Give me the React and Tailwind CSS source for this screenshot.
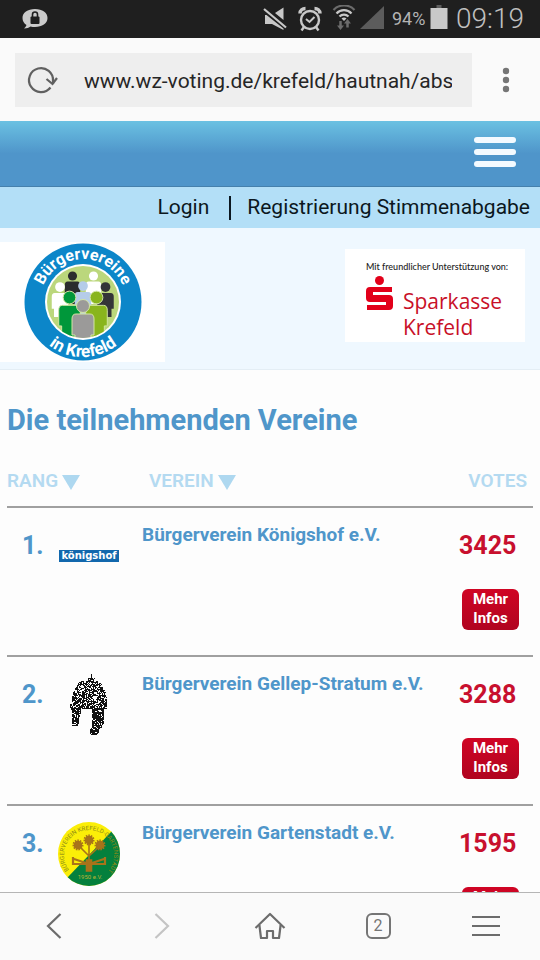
import React from "react";

const roboto = "font-['Roboto',sans-serif]";

function StatusBar() {
  return (
    <div className="flex h-[38px] shrink-0 items-center bg-[#1f1f1f] pr-4 pl-[22px] text-[#b4b4b4]">
      <svg className="h-[22px] w-[26px]" viewBox="0 0 26 22">
        <path d="M13 1C5.600 1 .5 4.600 .5 10c0 3 1.500 5.500 4 7-.5 1.500-1.500 2.500-2.500 3.500 3 0 5-.7 6.500-2 1.300.4 3 .5 4.500.5 7 0 12.500-3.700 12.500-9S20.400 1 13 1z" fill="#cbcbcb" />
        <rect x="8.500" y="8.500" width="9" height="7.500" rx="1" fill="#1f1f1f" />
        <path d="M10.500 9V6.500a2.500 2.500 0 0 1 5 0V9" fill="none" stroke="#1f1f1f" strokeWidth="1.600" />
      </svg>
      <div className="ml-auto flex items-center">
        <svg className="h-7 w-[26px]" viewBox="0 0 26 28" fill="#c8c8c8">
          <path d="M13 8L21.500 2.500v12.500z" />
          <path d="M3 10v9h7l11.500 6v-1.500L4.500 10z" />
          <path d="M2 4l22 18.500" stroke="#c8c8c8" strokeWidth="2.200" />
        </svg>
        <svg className="ml-2.5 h-7 w-6" viewBox="0 0 24 28" fill="none" stroke="#c8c8c8">
          <circle cx="12" cy="15" r="9" strokeWidth="2.400" />
          <path d="M8 14l3.500 3 5-5" strokeWidth="2" />
          <path d="M2 8.500c0-3 2.500-5 5.500-5M22 8.500c0-3-2.500-5-5.500-5" strokeWidth="3.500" />
          <path d="M6 22l-2.500 3.500M18 22l2.500 3.500" strokeWidth="2.400" />
        </svg>
        <svg className="ml-2.5 h-7 w-6" viewBox="0 0 24 28" fill="none">
          <path d="M1.500 5C7-1 17-1 22.500 5" stroke="#6c6c6c" strokeWidth="2.200" />
          <path d="M4.500 8.500c4-4.500 11-4.500 15 0M7.500 11.500c2.500-2.500 6.500-2.500 9 0" stroke="#c8c8c8" strokeWidth="2.200" />
          <path d="M9.500 13.500c1.500-1.300 3.500-1.300 5 0L12 16z" fill="#c8c8c8" />
          <path d="M8.500 16v6M15.500 22.500v-5" stroke="#6c6c6c" strokeWidth="2.500" />
          <path d="M5 20.500h7L8.500 25zM12 18.500h7L15.500 14z" fill="#6c6c6c" />
        </svg>
        <svg className="ml-1 h-7 w-6" viewBox="0 0 24 28">
          <path d="M0 24L24 1v23z" fill="#5c5c5c" />
        </svg>
        <span className="ml-2 w-[34px] text-lg whitespace-nowrap">94%</span>
        <svg className="ml-1 h-7 w-[18px]" viewBox="0 0 18 28">
          <path d="M6.500 0h5v4h-5z" fill="#5c5c5c" />
          <path d="M.5 3h17v21H.5z" fill="#c8c8c8" />
        </svg>
        <span className="ml-2 text-[28px] leading-8 font-light text-[#c0c0c0]">09:19</span>
      </div>
    </div>
  );
}

function AddressBar() {
  return (
    <div className="flex h-[83px] shrink-0 items-center bg-[#fafafa] pl-[15px]">
      <div className="flex h-[54px] min-w-0 flex-1 items-center bg-[#eee] pr-5 pl-[11px]">
        <button aria-label="Neu laden" className="shrink-0">
          <svg className="h-8 w-8" viewBox="0 0 32 32" fill="none" stroke="#606060" strokeWidth="2.200">
            <path d="M24.500 23.500A12 12 0 1 1 27 17v3" />
            <path d="M20.500 15l6 5 4.500-6" />
          </svg>
        </button>
        <input
          aria-label="Adresse"
          defaultValue="www.wz-voting.de/krefeld/hautnah/abstimmung"
          className="ml-[26px] h-10 min-w-0 flex-1 bg-transparent pt-0.5 text-[21px] text-[#262626] outline-none"
        />
      </div>
      <button aria-label="Optionen" className="flex w-[68px] justify-center">
        <svg className="h-7 w-2" viewBox="0 0 8 28" fill="#757575">
          <circle cx="4" cy="5" r="3.200" />
          <circle cx="4" cy="14" r="3.200" />
          <circle cx="4" cy="23" r="3.200" />
        </svg>
      </button>
    </div>
  );
}

function Person({ x, y, s, color, outline }) {
  return (
    <g transform={`translate(${x} ${y}) scale(${s})`} fill={color} stroke={outline} strokeWidth="1">
      <path d="M-7 8Q-11 8-11 13V29H-8V40H8V29H11V13Q11 8 7 8z" />
      <circle cx="0" cy="0" r="6.500" />
    </g>
  );
}

function BuergervereineLogo() {
  return (
    <svg className="h-[118px] w-[118px]" viewBox="0 0 118 118" role="img" aria-label="Bürgervereine in Krefeld">
      <defs>
        <clipPath id="inner"><circle cx="59" cy="59" r="36" /></clipPath>
        <path id="arcTop" d="M16 59a43 43 0 0 1 86 0" />
        <path id="arcBottom" d="M4 59a55 55 0 0 0 110 0" />
      </defs>
      <circle cx="59" cy="59" r="58.500" fill="#0c86c9" />
      <circle cx="59" cy="59" r="38" fill="#fff" />
      <circle cx="59" cy="59" r="36" fill="#bbd77c" />
      <g clipPath="url(#inner)">
        <Person x={48.500} y={33} s={0.700} color="#2b2c2e" outline="none" />
        <Person x={69.500} y={33} s={0.700} color="#fff" outline="none" />
        <Person x={36} y={44} s={0.750} color="#fff" outline="none" />
        <Person x={81.500} y={44} s={0.750} color="#343538" outline="none" />
        <Person x={59} y={43} s={0.750} color="#b5cce9" outline="none" />
        <Person x={45.500} y={54.500} s={0.980} color="#00973a" outline="#d3e6a4" />
        <Person x={72.500} y={54.500} s={0.980} color="#89b51d" outline="#d3e6a4" />
        <Person x={59} y={63} s={1} color="#9b9a99" outline="#d3e6a4" />
      </g>
      <g className={roboto} fill="#fff" fontWeight="700" textAnchor="middle">
        <text fontSize="16"><textPath href="#arcTop" startOffset="50%">Bürgervereine</textPath></text>
        <text fontSize="17"><textPath href="#arcBottom" startOffset="50%">in Krefeld</textPath></text>
      </g>
    </svg>
  );
}

function Sponsor() {
  return (
    <div className="h-[93px] w-[180px] bg-white pt-[9px] pl-[21px] font-['Open_Sans',sans-serif]">
      <p className="font-['Lato',sans-serif] text-[9px] leading-[18px] font-medium whitespace-nowrap text-[#222]">Mit freundlicher Unterstützung von:</p>
      <div className="flex text-[#c81028]">
        <svg className="h-9 w-[27px]" viewBox="0 0 27 36" fill="#e2001a">
          <circle cx="13.500" cy="4.500" r="4.500" />
          <path d="M4 11h22v5H7v3h16a4 4 0 0 1 4 4V30a4 4 0 0 1-4 4H1v-5h19v-3H4a4 4 0 0 1-4-4V15a4 4 0 0 1 4-4z" />
        </svg>
        <p className="ml-2.5 pt-3 text-[21px] leading-[26px] font-medium">Sparkasse<br />Krefeld</p>
      </div>
    </div>
  );
}

function KoenigshofLogo() {
  return (
    <svg className="h-3 w-[60px]" viewBox="0 0 60 12" role="img">
      <rect width="60" height="12" fill="#1268ad" />
      <text x="30" y="9" textAnchor="middle" fill="#fff" fontSize="10" fontWeight="700" fontFamily="DejaVu Sans">königshof</text>
    </svg>
  );
}

const inHelmet = (x, y) => {
  if (y < 7) return Math.abs(x - 22) < (y > 3 ? 4 : 1);
  if (y < 29) return Math.abs(x - 20) < 18 * Math.sqrt(1 - ((30 - y) / 27) ** 2);
  if (y < 35) return x > 0 && x < 38;
  if (y < 52 && x >= 2 + (y - 35) / 16 && x < 12 - (y - 35) / 5) return true;
  const taper = y > 48 ? (y - 48) / 1.7 : 0;
  return y < 61 && x >= (y > 52 ? 21 : 23) && x < 35 - taper;
};

const helmetDots = [];
for (let y = 0; y < 62; y += 1) {
  for (let x = 0; x < 40; x += 1) {
    const noise = Math.abs(Math.sin(x * 127.1 + y * 311.7) * 43758.5453) % 1;
    if (inHelmet(x, y) && noise < (y > 33 ? 0.82 : 0.64)) helmetDots.push([x, y]);
  }
}

function HelmetLogo() {
  return (
    <svg className="h-[62px] w-10" viewBox="0 0 40 62" fill="#111" role="img" aria-label="Helm">
      {helmetDots.map(([x, y]) => <rect key={`${x}-${y}`} x={x} y={y} width="1" height="1" />)}
    </svg>
  );
}

function Flower({ x, y }) {
  return (
    <g>
      <circle cx={x} cy={y} r="3.500" />
      <circle cx={x} cy={y} r="4.500" fill="none" strokeWidth="2" strokeDasharray="1.500 1" />
    </g>
  );
}

function GartenstadtLogo() {
  return (
    <svg className="h-16 w-[62px]" viewBox="0 0 62 64" role="img">
      <defs>
        <clipPath id="disc"><ellipse cx="31" cy="32" rx="31" ry="32" /></clipPath>
        <path id="discTop" d="M11 48A25 25 0 1 1 51 48" />
      </defs>
      <g clipPath="url(#disc)">
        <path d="M0 0h62v64H0z" fill="#fbee08" />
        <path d="M9 56L53 10l9-8v62H9z" fill="#04803d" />
      </g>
      <g stroke="#a8731a" fill="#a8731a" strokeWidth="1.600">
        <path d="M31 44V21M31 34L21 24M31 34L42 24" fill="none" />
        <Flower x={31} y={18} />
        <Flower x={20} y={23} />
        <Flower x={42} y={23} />
        <path d="M28.500 38h5v11h-5z" />
        <path d="M15 35v7l13 0M16 37l12 4M47 35v7l-13 0M46 37l-12 4" fill="none" strokeWidth="2.200" />
      </g>
      <text fill="#8c8a16" fontSize="6" className={roboto}>
        <textPath href="#discTop">BÜRGERVEREIN KREFELD-GARTENSTADT</textPath>
      </text>
      <text x="32" y="57" textAnchor="middle" fill="#b9b236" fontSize="6" className={roboto}>1950 e.V.</text>
    </svg>
  );
}

const clubs = [
  { rank: "1.", name: "Bürgerverein Königshof e.V.", votes: 3425, Logo: KoenigshofLogo },
  { rank: "2.", name: "Bürgerverein Gellep-Stratum e.V.", votes: 3288, Logo: HelmetLogo },
  { rank: "3.", name: "Bürgerverein Gartenstadt e.V.", votes: 1595, Logo: GartenstadtLogo },
];

function SortArrow() {
  return (
    <svg className="mt-1 h-4 w-[18px]" viewBox="0 0 18 16" fill="#aed8f0">
      <path d="M0 0h18L9 15z" />
    </svg>
  );
}

function Ranking() {
  return (
    <section className="px-[7px] pt-[30px]">
      <h1 className="text-[29px] leading-10 font-bold text-[#4f96ca]">Die teilnehmenden Vereine</h1>
      <table className="mt-4 w-full table-fixed border-collapse text-left">
        <colgroup>
          <col className="w-[51px]" />
          <col className="w-[84px]" />
          <col />
          <col className="w-[86px]" />
        </colgroup>
        <thead>
          <tr className="h-[51px] border-b-2 border-[#a0a0a0] text-[19px] text-[#b4daf1]">
            <th colSpan={2} className="p-0 font-semibold">
              <button className="flex items-center gap-1">RANG <SortArrow /></button>
            </th>
            <th className="p-0 pl-[7px] font-semibold">
              <button className="flex items-center gap-1">VEREIN <SortArrow /></button>
            </th>
            <th className="p-0 pr-1.5 text-right font-semibold">VOTES</th>
          </tr>
        </thead>
        <tbody>
          {clubs.map(({ rank, name, votes, Logo }) => (
            <tr key={rank} className="h-[149px] border-b-2 border-[#a0a0a0] align-top">
              <td className="p-0 pt-[22px] pl-[15px] text-[25px] leading-8 font-bold text-[#4f96ca]">{rank}</td>
              <td className="p-0 pt-4">
                <div className="flex h-16 w-[62px] items-center justify-center"><Logo /></div>
              </td>
              <td className="p-0 pt-[13px] text-[19px] leading-7 font-bold whitespace-nowrap text-[#4f96ca]">{name}</td>
              <td className="p-0 pt-[22px] pl-1 text-left">
                <div className="w-20 pl-2 text-[25px] leading-8 font-bold text-[#c8102e]">{votes}</div>
                <button className="mt-[27px] ml-[11px] h-[41px] w-[57px] rounded-md bg-linear-to-b from-[#d00524] to-[#b00420] pb-0.5 text-[15px] leading-[19px] font-bold text-white">
                  Mehr<br />Infos
                </button>
              </td>
            </tr>
          ))}
        </tbody>
      </table>
    </section>
  );
}

function BottomBar() {
  return (
    <nav className="grid h-[68px] shrink-0 grid-cols-5 place-items-center border-t border-[#b5b5b5] bg-[#fafafa] pb-0.5">
      <button aria-label="Zurück">
        <svg className="h-7 w-4" viewBox="0 0 16 28" fill="none" stroke="#6c6c6c" strokeWidth="2.200"><path d="M14.500 2L2 14l12.500 12" /></svg>
      </button>
      <button aria-label="Vorwärts">
        <svg className="h-7 w-4" viewBox="0 0 16 28" fill="none" stroke="#c4c4c4" strokeWidth="2.200"><path d="M1.500 2L14 14 1.500 26" /></svg>
      </button>
      <button aria-label="Startseite">
        <svg className="h-7 w-8" viewBox="0 0 32 28" fill="none" stroke="#6c6c6c" strokeWidth="2.200" strokeLinejoin="round">
          <path d="M1.500 16L16 2l14.500 14" />
          <path d="M5.500 13v1l1.500 12h6v-7h6v7h6l1.500-12v-1" />
        </svg>
      </button>
      <button aria-label="Tabs" className="h-[26px] w-[25px] rounded-md border-2 border-[#757575] text-base leading-[22px] text-[#757575]">2</button>
      <button aria-label="Menü">
        <svg className="h-7 w-7" viewBox="0 0 28 28" stroke="#6c6c6c" strokeWidth="2"><path d="M0 5h28M0 14h28M0 23h28" /></svg>
      </button>
    </nav>
  );
}

export default function App() {
  return (
    <div className={`flex h-screen flex-col overflow-hidden bg-[#fdfdfd] ${roboto}`}>
      <StatusBar />
      <AddressBar />
      <main className="min-h-0 flex-1 overflow-hidden">
        <header className="flex h-[66px] items-center justify-end border-b border-[#4580ac] bg-linear-to-b from-[#6bc1e2] to-[#4f95ca] to-50% px-6 pb-1">
          <button aria-label="Navigation" className="flex w-[42px] flex-col gap-1.5">
            <span className="h-1.5 rounded-sm bg-[#f4faff]" />
            <span className="h-1.5 rounded-sm bg-[#f4faff]" />
            <span className="h-1.5 rounded-sm bg-[#f4faff]" />
          </button>
        </header>
        <div className="flex h-[41px] items-center justify-end bg-[#b3dff7] pr-2.5 text-[21px] text-[#0b1720]">
          <a href="#login">Login</a>
          <span className="mr-4 ml-5 h-6 w-0.5 bg-[#0b1720]" />
          <a href="#registrierung">Registrierung Stimmenabgabe</a>
        </div>
        <div className="flex h-[142px] items-start justify-between border-b border-[#e4eef5] bg-[#eff8ff] pr-[15px]">
          <div className="mt-3.5 flex h-[120px] w-[165px] justify-center bg-white pt-px"><BuergervereineLogo /></div>
          <div className="mt-[21px]"><Sponsor /></div>
        </div>
        <Ranking />
      </main>
      <BottomBar />
    </div>
  );
}
